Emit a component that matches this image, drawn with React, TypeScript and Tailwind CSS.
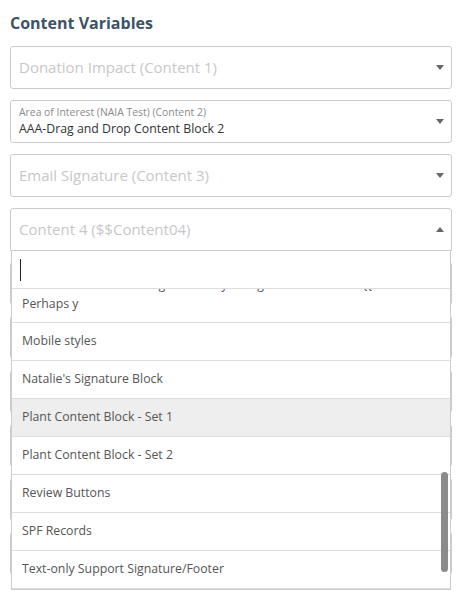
import React from "react"

function Caret({ up = false }: { up?: boolean }) {
  return (
    <svg width="8" height="5" viewBox="0 0 8 5" className="shrink-0">
      <path d={up ? "M0 5h8L4 0z" : "M0 0h8L4 5z"} fill="#666" />
    </svg>
  )
}

function SelectBox({ placeholder, open = false }: { placeholder: string; open?: boolean }) {
  return (
    <div
      className={`flex h-[43px] items-center justify-between border border-[#ccc] bg-white pl-[8px] pr-[7px] ${
        open ? "rounded-t-[3px]" : "rounded-[3px]"
      }`}
    >
      <span className="text-[15px] text-[#c8c8c8]">{placeholder}</span>
      <Caret up={open} />
    </div>
  )
}

const options = [
  "Mobile styles",
  "Natalie's Signature Block",
  "Plant Content Block - Set 1",
  "Plant Content Block - Set 2",
  "Review Buttons",
  "SPF Records",
  "Text-only Support Signature/Footer",
]

export default function App() {
  return (
    <div className="min-h-[605px] bg-white px-[10px] pt-[11px] font-['Open_Sans',sans-serif]">
      <h2 className="mb-[11px] text-[16px] font-bold leading-6 text-[#3d5366]">Content Variables</h2>

      <div className="flex flex-col gap-[11px]">
        <SelectBox placeholder="Donation Impact (Content 1)" />

        <div className="flex h-[43px] items-center justify-between rounded-[3px] border border-[#ccc] bg-white pl-[8px] pr-[7px]">
          <div className="-mt-[2px] flex flex-col">
            <span className="text-[10.4px] leading-[15px] text-[#8a8a8a]">Area of Interest (NAIA Test) (Content 2)</span>
            <span className="text-[12.3px] leading-[17px] text-[#333]">AAA-Drag and Drop Content Block 2</span>
          </div>
          <Caret />
        </div>

        <SelectBox placeholder="Email Signature (Content 3)" />

        <div className="relative">
          <SelectBox placeholder="Content 4 ($$Content04)" open />

          <div className="absolute left-[1px] right-[1px] top-full z-10 border-x border-b border-[#ccc] bg-white">
            <div className="flex h-[38px] items-center border-b border-[#ddd] pl-[8px]">
              <span className="h-[22px] w-px bg-[#222]" />
            </div>
            <div className="relative h-[300px] overflow-hidden">
              <div className="-mt-[23px]">
                <div className="border-b border-[#ddd] px-[10px] py-[9px] text-[12.3px] leading-[19px] text-[#555]">
                  <div className="truncate">NAIA PLEASE: We're delighted that you registered to attend {"{{customer."}</div>
                  <div>Perhaps y</div>
                </div>
                {options.map((o) => (
                  <div
                    key={o}
                    className={`flex h-[38px] items-center border-b border-[#ddd] px-[10px] text-[12.3px] text-[#555] ${
                      o === "Plant Content Block - Set 1" ? "bg-[#eee]" : "bg-white"
                    }`}
                  >
                    {o}
                  </div>
                ))}
              </div>
              <div className="absolute right-[2px] top-[183px] h-[100px] w-[7px] rounded-full bg-[#8a8a8a]" />
            </div>
          </div>
        </div>

        <SelectBox placeholder="Content 5 ($$Content05)" />
        <SelectBox placeholder="Content 6 ($$Content06)" />
        <SelectBox placeholder="Content 7 ($$Content07)" />
        <SelectBox placeholder="Content 8 ($$Content08)" />
        <SelectBox placeholder="Content 9 ($$Content09)" />
        <SelectBox placeholder="Content 10 ($$Content10)" />
      </div>
    </div>
  )
}
